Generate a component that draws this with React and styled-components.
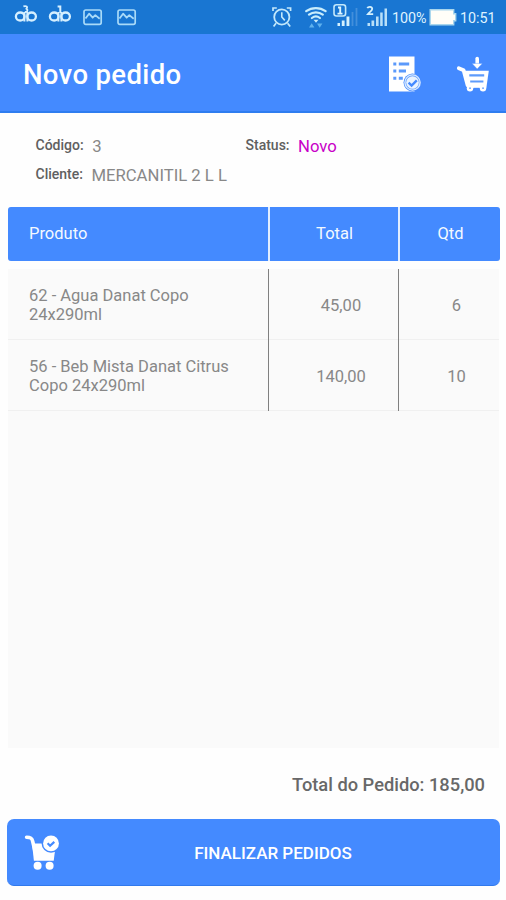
import React from "react";
import styled, { createGlobalStyle } from "styled-components";

const items = [
  { name: "62 - Agua Danat Copo 24x290ml", total: "45,00", qty: "6" },
  { name: "56 - Beb Mista Danat Citrus Copo 24x290ml", total: "140,00", qty: "10" },
];

const DbIcon = ({ tall }) => (
  <svg width="24" height="34" viewBox="0 0 24 34" fill="none" stroke="#d5efff">
    <ellipse cx="6.2" cy="16.5" rx="4.3" ry="4" strokeWidth="2.3" />
    <ellipse cx="17.6" cy="16.5" rx="4.3" ry="4" strokeWidth="2.3" />
    <path d="M10.4 21.5V12M13.4 21.5V12" strokeWidth="2" />
    {tall ? (
      <path d="M9.6 6.6h2.7V13" strokeWidth="2" />
    ) : (
      <path d="M9.4 6.4c3-1 4.6.4 3 2.4 2 1.4 1 3.4-1.6 3.2" strokeWidth="1.8" />
    )}
  </svg>
);

const PictureIcon = () => (
  <svg width="20" height="34" viewBox="0 0 20 34" fill="none" stroke="#a9daf8">
    <rect x="1" y="10" width="17.2" height="14.4" rx="1.8" strokeWidth="1.7" />
    <path d="M2.5 18.5l3.6-4.8 3.6 4 2.6-2.6 4.4 3.6" strokeWidth="1.8" strokeLinejoin="round" />
  </svg>
);

const AlarmIcon = () => (
  <svg width="20" height="34" viewBox="0 0 20 34" fill="none" stroke="#c3e8fb">
    <circle cx="9.8" cy="17" r="7.6" strokeWidth="1.8" />
    <path d="M9.8 12.2V17l3 3.4" strokeWidth="1.6" />
    <path d="M1 11V8h3.8M18.6 11V8h-3.8M4 23.2L1.6 26.5M15.6 23.2l2.6 3.3" strokeWidth="1.7" />
  </svg>
);

const WifiIcon = () => (
  <svg width="22" height="34" viewBox="0 0 22 34" fill="none" stroke="#c9edfc" strokeLinecap="round">
    <path d="M1.2 11.2C6.8 7 15 7 20.6 11.2M4 14.7C8 11.6 13.8 11.6 17.8 14.7M6.9 18c2.5-2 5.5-2 8 0" strokeWidth="2.2" />
    <path d="M8.5 19.8h5l-2.5 3z" fill="#c9edfc" stroke="none" />
    <path d="M4 27.5l2.7-4.2 2.7 4.2zM12 23.6h5.4l-2.7 4.2z" fill="#5fb1ee" stroke="none" />
  </svg>
);

const SimOneIcon = () => (
  <svg width="26" height="34" viewBox="0 0 26 34" fill="none">
    <path d="M18.6 12h1.8v14h-1.8zM22.6 8h1.8v18h-1.8z" fill="#438fdb" />
    <path d="M4.5 23H7v3H4.5zM8.8 20.5h2.8V26H8.8zM13.5 16.5h2.9V26h-2.9z" fill="#d5f1fd" />
    <rect x="1" y="4.7" width="11.6" height="11.3" rx="2.5" stroke="#c3e8fb" strokeWidth="1.6" />
    <path d="M5 7.5h2.2v6.2M4.5 13.6h5" stroke="#dff5fe" strokeWidth="1.9" />
  </svg>
);

const SimTwoIcon = () => (
  <svg width="22" height="34" viewBox="0 0 22 34" fill="none">
    <path d="M1.3 8.2C2 6.6 6.4 6.2 6.2 9c-.1 1.8-3 3.3-4.4 5.2h5.4" stroke="#d5f1fd" strokeWidth="1.8" />
    <path d="M1.5 23H4v3H1.5zM5.5 20.5h2.7V26H5.5zM10 16.5h2.6V26H10zM14.2 12.5h2.5V26h-2.5zM18.5 8.5h2.5V26h-2.5z" fill="#b9e0f8" />
  </svg>
);

const BatteryIcon = () => (
  <svg width="28" height="34" viewBox="0 0 28 34">
    <path d="M1.2 9.7h23.5v4h2v7h-2v4H1.2z" fill="#fffef8" stroke="#a8d6ed" strokeWidth="1.4" />
  </svg>
);

const OrderListIcon = () => (
  <svg width="34" height="38" viewBox="0 0 34 38" fill="none">
    <path d="M1 1.5h25.5v35H1z" fill="#fff" />
    <path d="M5.3 9h3M5.3 16h3M5.3 23.2h3M10.8 9h10.4M10.8 16H18M10.8 23.2h4" stroke="#5b99fb" strokeWidth="3" />
    <circle cx="24.5" cy="27.5" r="9" fill="#448aff" />
    <circle cx="24.5" cy="27.5" r="7.6" fill="#5e9bfb" stroke="#d9eaff" strokeWidth="1.4" />
    <circle cx="24.5" cy="27.5" r="6.3" fill="#e9f3ff" />
    <path d="M20.6 27.6l3 2.9 5.2-5.2" stroke="#448aff" strokeWidth="2.4" />
  </svg>
);

const CartDownIcon = () => (
  <svg width="34" height="38" viewBox="0 0 34 38" fill="none">
    <path d="M2.8 13.2l4.8 2 4 15" stroke="#fff" strokeWidth="3.8" strokeLinecap="round" strokeLinejoin="round" />
    <path d="M7.5 15.8h25.3l-2.5 17.4H11.5z" fill="#fff" />
    <path d="M13.3 20.4h14.9M14.2 26.5h13.2" stroke="#5e9bfb" strokeWidth="2.2" />
    <circle cx="14" cy="33.3" r="3.2" fill="#fff" />
    <circle cx="27" cy="33.3" r="3.2" fill="#fff" />
    <path d="M17.6 32.8h6v3h-6z" fill="#448aff" />
    <path d="M14 33.2h.1M27 33.2h.1" stroke="#73a8fc" strokeWidth="1.8" strokeLinecap="round" />
    <path d="M21.2 3.5V9" stroke="#fff" strokeWidth="3.6" strokeLinecap="round" />
    <path d="M16 8.4h10.4l-5.2 5.6z" fill="#fff" stroke="#448aff" strokeWidth=".4" />
  </svg>
);

const CartCheckIcon = () => (
  <svg width="36" height="38" viewBox="0 0 36 38" fill="none">
    <path d="M2.6 3.3c4 0 5.4.8 6.1 4l2.3 10" stroke="#fff" strokeWidth="3.6" strokeLinecap="round" />
    <path d="M8 9.4h24l-2.3 17.3H9.9z" fill="#fff" />
    <circle cx="13.6" cy="31.8" r="4" fill="#fff" />
    <circle cx="25.6" cy="31.8" r="4" fill="#fff" />
    <circle cx="27" cy="9.4" r="9.4" fill="#448aff" />
    <circle cx="27" cy="9.4" r="7.9" fill="#fff" />
    <path d="M23.6 9.2l2.5 2.5 4.2-3.8" stroke="#448aff" strokeWidth="2.2" />
  </svg>
);

const App = () => {
  return (
    <Screen>
      <GlobalStyle />
      <StatusBar>
        <IconSlot $gap="10px"><DbIcon /></IconSlot>
        <IconSlot $gap="11px"><DbIcon tall /></IconSlot>
        <IconSlot $gap="14px"><PictureIcon /></IconSlot>
        <IconSlot><PictureIcon /></IconSlot>
        <Spacer />
        <IconSlot $gap="13px"><AlarmIcon /></IconSlot>
        <IconSlot $gap="6px"><WifiIcon /></IconSlot>
        <IconSlot $gap="7px"><SimOneIcon /></IconSlot>
        <IconSlot $gap="4px"><SimTwoIcon /></IconSlot>
        <StatusText $width="37px">100%</StatusText>
        <IconSlot $gap="3px"><BatteryIcon /></IconSlot>
        <StatusText $width="46px">10:51</StatusText>
      </StatusBar>
      <AppBar>
        <Title>Novo pedido</Title>
        <OrderListIcon />
        <CartDownIcon />
      </AppBar>
      <Details>
        <Field>
          <Label>Código:</Label>
          <Value>3</Value>
        </Field>
        <Field>
          <Label>Status:</Label>
          <Value $color="#c800c8">Novo</Value>
        </Field>
        <Field>
          <Label>Cliente:</Label>
          <Value>MERCANITIL 2 L L</Value>
        </Field>
      </Details>
      <TableHead>
        <HeadCell $align="left">Produto</HeadCell>
        <HeadCell>Total</HeadCell>
        <HeadCell>Qtd</HeadCell>
      </TableHead>
      <TableBody>
        {items.map((item) => (
          <Row key={item.name}>
            <Product>{item.name}</Product>
            <Amount>{item.total}</Amount>
            <Amount>{item.qty}</Amount>
          </Row>
        ))}
      </TableBody>
      <OrderTotal>Total do Pedido: 185,00</OrderTotal>
      <FinishButton>
        <CartCheckIcon />
        <span>FINALIZAR PEDIDOS</span>
      </FinishButton>
    </Screen>
  );
};

const GlobalStyle = createGlobalStyle`
  * {
    box-sizing: border-box;
  }
  body {
    margin: 0;
    background-color: #fefefe;
  }
`;

const Screen = styled.div`
  width: 506px;
  height: 900px;
  overflow: hidden;
  display: flex;
  flex-direction: column;
  background-color: #fefefe;
  font-family: Roboto, sans-serif;
  svg {
    display: block;
    flex-shrink: 0;
  }
`;

const StatusBar = styled.div`
  height: 34px;
  flex-shrink: 0;
  display: flex;
  align-items: center;
  padding-left: 14px;
  background-color: #1976d2;
`;

const IconSlot = styled.div`
  margin-right: ${(props) => props.$gap || 0};
`;

const Spacer = styled.div`
  flex: 1;
`;

const StatusText = styled.div`
  width: ${(props) => props.$width};
  flex-shrink: 0;
  padding-top: 2px;
  color: #dff3ff;
  font-size: 14.3px;
  white-space: nowrap;
`;

const AppBar = styled.div`
  height: 79px;
  flex-shrink: 0;
  display: flex;
  align-items: center;
  gap: 34px;
  padding: 2px 16px 0 23px;
  background-color: #448aff;
  border-bottom: 2px solid #2f7df0;
`;

const Title = styled.h1`
  flex: 1;
  margin: 0;
  padding-top: 2px;
  color: #fff;
  font-size: 27.5px;
  font-weight: 500;
  letter-spacing: 0.35px;
`;

const Details = styled.div`
  height: 94px;
  flex-shrink: 0;
  display: grid;
  grid-template-columns: 210px 1fr;
  grid-template-rows: 29px 30px;
  padding: 18px 0 0 36px;
`;

const Field = styled.div`
  display: flex;
  align-items: center;
  gap: 8.5px;
`;

const Label = styled.span`
  margin-left: -0.5px;
  color: #606060;
  font-size: 14px;
  font-weight: 500;
  line-height: 24px;
  padding-bottom: 2px;
`;

const Value = styled.span`
  padding-top: 1px;
  color: ${(props) => props.$color || "#888"};
  font-size: 16.7px;
  white-space: nowrap;
`;

const TableHead = styled.div`
  height: 54px;
  flex-shrink: 0;
  display: grid;
  grid-template-columns: 260px 128px 100px;
  gap: 2px;
  margin: 0 6px 0 8px;
  border-radius: 3px;
  overflow: hidden;
  background-color: #e2eeff;
`;

const HeadCell = styled.div`
  display: flex;
  align-items: center;
  justify-content: ${(props) => props.$align || "center"};
  padding: 0 0 1px ${(props) => (props.$align ? "21px" : "1px")};
  background-color: #448aff;
  color: #f3f9ff;
  font-size: 16.5px;
`;

const TableBody = styled.div`
  height: 479px;
  flex-shrink: 0;
  margin: 8px 7px 0 8px;
  background-color: #fafafa;
`;

const Row = styled.div`
  height: 71px;
  display: grid;
  grid-template-columns: 260px 130px 101px;
  box-shadow: inset 0 -1px #f0f0f0;
  color: #888;
  font-size: 16.5px;
`;

const Product = styled.div`
  display: flex;
  align-items: center;
  padding: 1px 34px 0 21px;
  line-height: 19.5px;
`;

const Amount = styled.div`
  display: flex;
  align-items: center;
  justify-content: center;
  padding: 1px 0 0 15px;
  border-left: 1px solid #808080;
`;

const OrderTotal = styled.div`
  height: 71px;
  flex-shrink: 0;
  display: flex;
  align-items: center;
  justify-content: flex-end;
  padding: 2px 21px 0 0;
  color: #686868;
  font-size: 18.3px;
  font-weight: 500;
`;

const FinishButton = styled.button`
  height: 67px;
  flex-shrink: 0;
  display: flex;
  align-items: center;
  margin: 0 6px 0 7px;
  padding: 2px 0 0 17px;
  border: none;
  border-bottom: 1px solid #3179ec;
  border-radius: 7px;
  background-color: #448aff;
  color: #fff;
  font-family: inherit;
  font-size: 17px;
  font-weight: 500;
  span {
    flex: 1;
    padding: 0 14px 0 0;
  }
`;

export default App;
